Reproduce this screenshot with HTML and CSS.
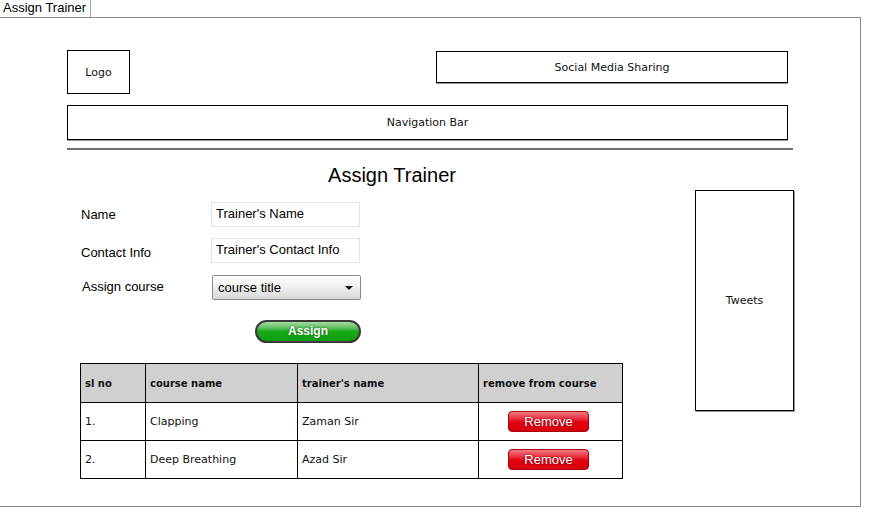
FILE: index.html
```html
<!DOCTYPE html>
<html>
<head>
<meta charset="utf-8">
<link rel="stylesheet" href="styles.css">
</head>
<body>
<div class="tab">Assign Trainer</div>
<div class="frame">
  <div class="header">
    <div class="box logo">Logo</div>
    <div class="box social">Social Media Sharing</div>
  </div>
  <div class="box nav">Navigation Bar</div>
  <div class="rule"></div>
  <div class="main">
    <div class="content">
      <h1 class="title">Assign Trainer</h1>
      <div class="form">
        <div class="row">
          <span class="label">Name</span>
          <div class="input">Trainer's Name</div>
        </div>
        <div class="row row-contact">
          <span class="label label-low">Contact Info</span>
          <div class="input">Trainer's Contact Info</div>
        </div>
        <div class="row row-select">
          <span class="label label-course">Assign course</span>
          <div class="select">
            <span>course title</span>
            <span class="arrow"></span>
          </div>
        </div>
      </div>
      <div class="assign">Assign</div>
      <table class="grid">
        <thead>
          <tr>
            <th class="c1">sl no</th>
            <th class="c2">course name</th>
            <th class="c3">trainer's name</th>
            <th class="c4">remove from course</th>
          </tr>
        </thead>
        <tbody>
          <tr>
            <td>1.</td>
            <td>Clapping</td>
            <td>Zaman Sir</td>
            <td class="act"><span class="remove">Remove</span></td>
          </tr>
          <tr>
            <td>2.</td>
            <td>Deep Breathing</td>
            <td>Azad Sir</td>
            <td class="act"><span class="remove">Remove</span></td>
          </tr>
        </tbody>
      </table>
    </div>
    <div class="box tweets">Tweets</div>
  </div>
</div>
</body>
</html>
```

FILE: styles.css
```css
html, body {
  margin: 0;
  padding: 0;
  background: #ffffff;
}

body {
  font-family: "Liberation Sans", Arial, sans-serif;
  color: #000;
  width: 875px;
  height: 523px;
  overflow: hidden;
}

.tab {
  box-sizing: border-box;
  width: 91px;
  height: 17px;
  padding-left: 3px;
  font-size: 13px;
  line-height: 15px;
  border-right: 1px solid #a8a8b0;
  white-space: nowrap;
}

.frame {
  box-sizing: border-box;
  width: 861px;
  height: 490px;
  border-top: 1px solid #8c8c96;
  border-right: 1px solid #8c8c96;
  border-bottom: 1px solid #8c8c96;
  padding: 32px 0 0 67px;
}

.box {
  box-sizing: border-box;
  border: 1px solid #000;
  display: flex;
  align-items: center;
  justify-content: center;
  font-family: "DejaVu Sans", "Liberation Sans", sans-serif;
  font-size: 11px;
  color: #111;
}

.header {
  display: flex;
  justify-content: space-between;
  align-items: flex-start;
  width: 721px;
}

.logo {
  width: 63px;
  height: 44px;
}

.social {
  width: 352px;
  height: 32px;
  margin-top: 1px;
  box-shadow: 0 1px 0 #9a9a9a;
}

.nav {
  width: 721px;
  height: 35px;
  margin-top: 11px;
  box-shadow: 0 1px 0 #9a9a9a;
}

.rule {
  width: 726px;
  height: 2px;
  margin-top: 8px;
  background: #6e6e6e;
}

.main {
  display: flex;
  align-items: flex-start;
  margin-top: 13px;
}

.content {
  width: 628px;
}

.title {
  margin: 0;
  padding-left: 22px;
  text-align: center;
  font-size: 20px;
  line-height: 24px;
  font-weight: normal;
}

.form {
  margin-top: 15px;
  padding-left: 14px;
}

.row {
  display: flex;
  align-items: center;
  height: 25px;
}

.row-contact {
  margin-top: 11px;
}

.row-select {
  margin-top: 12px;
}

.label {
  width: 130px;
  font-size: 13px;
}

.label-low {
  position: relative;
  top: 2px;
}

.label-course {
  padding-left: 1px;
  width: 130px;
  position: relative;
  top: -1px;
}

.input {
  box-sizing: border-box;
  width: 149px;
  height: 25px;
  border: 1px solid #dfe2e6;
  padding-left: 4px;
  font-size: 13px;
  line-height: 22px;
  white-space: nowrap;
}

.select {
  box-sizing: border-box;
  width: 149px;
  height: 25px;
  margin-left: 0;
  border: 1px solid #8a8a8a;
  border-radius: 2px;
  background: linear-gradient(#ffffff, #f2f2f2 40%, #d9d9d9);
  display: flex;
  align-items: center;
  justify-content: space-between;
  padding: 0 7px 0 5px;
  font-size: 13px;
}

.arrow {
  width: 0;
  height: 0;
  border-left: 4px solid transparent;
  border-right: 4px solid transparent;
  border-top: 4px solid #111;
}

.assign {
  box-sizing: border-box;
  width: 106px;
  height: 23px;
  margin: 20px 0 0 188px;
  border: 2px solid #383838;
  border-radius: 12px;
  background: linear-gradient(#a6dca6 0%, #60c060 30%, #18a818 50%, #0c9c0c 100%);
  color: #fff;
  font-size: 12px;
  font-weight: bold;
  text-align: center;
  line-height: 19px;
  text-shadow: 0 0 2px #1a5a1a;
}

.grid {
  margin: 20px 0 0 13px;
  border-collapse: collapse;
  font-family: "DejaVu Sans", "Liberation Sans", sans-serif;
  font-size: 11px;
  color: #111;
}

.grid th,
.grid td {
  border: 1px solid #000;
  padding: 0 0 0 4px;
  text-align: left;
}

.grid th {
  background: #d0d0d0;
  height: 38px;
  font-size: 10px;
  font-weight: bold;
}

.grid td {
  height: 37px;
}

.c1 { width: 60px; }
.c2 { width: 147px; }
.c3 { width: 176px; }
.c4 { width: 139px; }

.grid td.act {
  padding: 0;
  text-align: center;
}

.remove {
  display: inline-block;
  box-sizing: border-box;
  width: 81px;
  height: 21px;
  margin-left: -4px;
  border: 1px solid #a80010;
  border-radius: 4px;
  background: linear-gradient(#f27a80 0%, #ec3040 35%, #e00010 55%, #d8000e 100%);
  color: #fff;
  font-family: "Liberation Sans", Arial, sans-serif;
  font-size: 13px;
  line-height: 19px;
  text-align: center;
  text-shadow: 0 0 2px #700008;
  vertical-align: middle;
}

.tweets {
  width: 99px;
  height: 221px;
  margin-top: 27px;
  box-shadow: 1px 1px 0 #9a9a9a;
}
```
